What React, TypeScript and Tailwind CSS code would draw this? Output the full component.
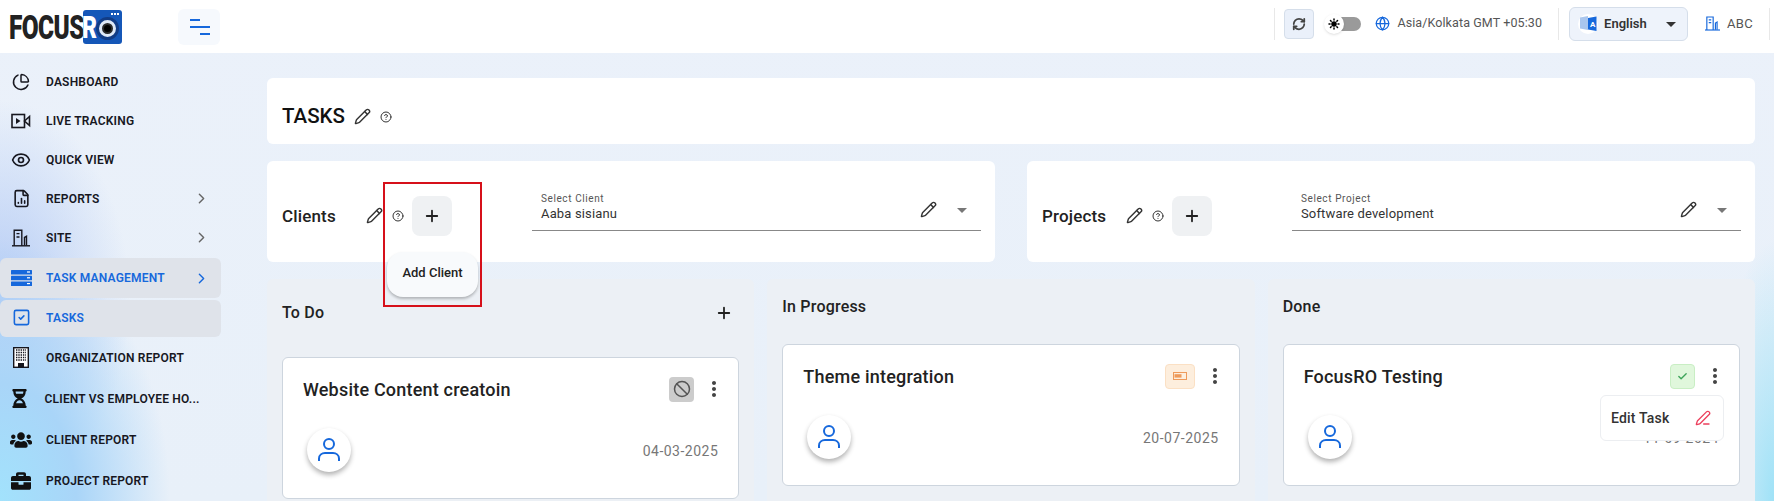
import { Ban, Check, ChevronRight, CircleHelp, ChartPie, Eye, FileChartColumn, Globe, PenLine, Pencil, Plus, RefreshCw, SquareCheck, Sun } from "lucide-react";
import { FaBriefcase, FaHourglassHalf, FaUsers } from "react-icons/fa";
import { MdArrowDropDown, MdMoreVert } from "react-icons/md";
import type { ReactNode } from "react";

const LiveIcon = () => (
  <svg width="20" height="16" viewBox="0 0 20 16" fill="none" stroke="#17171f" strokeWidth="1.6">
    <rect x="1" y="1.5" width="12.5" height="13" />
    <path d="M5 5v6l4.5-3z" fill="#17171f" stroke="none" />
    <path d="M13.5 8 18.5 3.5v9z" />
  </svg>
);

const StackIcon = () => (
  <svg width="21" height="16" viewBox="0 0 21 16" fill="#1668dc">
    <rect x="0" y="0" width="21" height="4.4" rx="0.5" />
    <rect x="0" y="5.8" width="21" height="4.4" rx="0.5" />
    <rect x="0" y="11.6" width="21" height="4.4" rx="0.5" />
    <rect x="16" y="1.4" width="3" height="1.2" fill="#fff" />
    <rect x="16" y="7.2" width="3" height="1.2" fill="#fff" />
    <rect x="16" y="13" width="3" height="1.2" fill="#fff" />
  </svg>
);

const OfficeIcon = () => (
  <svg width="16" height="21" viewBox="0 0 16 21">
    <rect x="0.7" y="0.7" width="14.6" height="19.6" fill="#fff" stroke="#15151c" strokeWidth="1.4" />
    <path d="M3 3h10M3 5.5h10M3 8h10M3 10.5h10M3 13h10" stroke="#15151c" strokeWidth="1.3" strokeDasharray="1.4 0.9" />
    <rect x="5" y="16" width="6" height="4.5" fill="#15151c" />
  </svg>
);

const SiteIcon = ({ color = "#17171f", size = 18 }: { color?: string; size?: number }) => (
  <svg width={size} height={size} viewBox="0 0 18 18" fill="none" stroke={color} strokeWidth="1.4">
    <path d="M0 16.8h18" />
    <path d="M2.2 16.8V1.2h7.6v15.6" />
    <path d="M4.5 4.6h3M4.5 8h3" />
    <path d="M12.5 16.5V8.5l2-1.2v9.2" />
  </svg>
);

const UserIcon = () => (
  <svg width="24" height="26" viewBox="0 0 24 26" fill="none" stroke="#1668dc" strokeWidth="2">
    <circle cx="12" cy="7" r="5" />
    <path d="M2 24v-2.5C2 18 5 16 8 16h8c3 0 6 2 6 5.5V24" />
  </svg>
);

const TranslateIcon = () => (
  <svg width="17" height="17" viewBox="0 0 17 17">
    <path d="M0 2.5 8 1v14l-8-1.5z" fill="#a9c6ee" />
    <path d="M8 3 16.5 1.5V16L8 14.5z" fill="#1668dc" />
    <text x="10" y="11.5" fontSize="8" fontWeight="700" fill="#fff" fontFamily="Roboto, sans-serif">A</text>
  </svg>
);

const BatteryIcon = () => (
  <svg width="14" height="8" viewBox="0 0 14 8">
    <rect x="0.5" y="0.5" width="13" height="7" fill="none" stroke="#ee9a5a" />
    <rect x="1.5" y="2.2" width="7" height="3.4" fill="#ee9a5a" />
  </svg>
);

const Logo = () => (
  <div className="flex items-center pl-[9px] w-[178px]">
    <span className="w-[74px] font-black text-[34px] leading-none text-[#222] origin-left scale-x-[0.72] tracking-tight whitespace-nowrap">FOCUS</span>
    <div className="relative w-[39px] h-[34px] bg-[#1557b8] rounded-[3px] flex items-center">
      <span className="font-black text-[32px] leading-none text-white origin-left scale-x-[0.72] -ml-px">R</span>
      <div className="absolute left-[13px] top-[7px] size-[23px] rounded-full bg-[#dfe9f7] border-[3px] border-[#123c85] flex items-center justify-center">
        <div className="size-[11px] rounded-full bg-black border-2 border-[#2a2a2a]" />
      </div>
      <div className="absolute right-[3px] top-[3px] flex gap-px">
        <div className="size-[2px] bg-white" />
        <div className="size-[2px] bg-white" />
        <div className="size-[2px] bg-white" />
      </div>
    </div>
  </div>
);

const Header = () => (
  <header className="h-[53px] bg-white flex items-center shrink-0 overflow-hidden">
    <Logo />
    <button className="w-[42px] h-[36px] rounded-md bg-[#f6f9fd] flex flex-col justify-center px-3 gap-[5px]">
      <span className="block h-[2px] w-[10px] bg-[#1668dc]" />
      <span className="block h-[2px] w-[20px] bg-[#1668dc]" />
      <span className="block h-[2px] w-[10px] ml-[10px] bg-[#1668dc]" />
    </button>
    <div className="ml-auto mr-[-48px] mb-[6px] flex items-center h-[32px] shrink-0">
      <div className="h-full w-px bg-[#e8e8e8] mr-[9px]" />
      <button className="size-[30px] rounded-[4px] bg-[#eaf0fa] border border-[#d5deea] flex items-center justify-center">
        <RefreshCw size={14} strokeWidth={3} className="text-[#444]" />
      </button>
      <div className="relative w-[38px] h-[14px] ml-[9px] flex justify-end">
        <div className="w-[28px] h-[14px] rounded-full bg-[#9a9a9a]" />
        <div className="absolute left-[1px] -top-[3px] size-[20px] rounded-full bg-white shadow flex items-center justify-center">
          <Sun size={12} strokeWidth={3} className="text-black fill-black" />
        </div>
      </div>
      <Globe size={15} className="ml-[14px] text-[#1668dc]" />
      <span className="ml-[7px] text-[12.5px] tracking-[0.1px] text-[#555]">Asia/Kolkata GMT +05:30</span>
      <div className="h-full w-px bg-[#e8e8e8] ml-4 mr-[10px]" />
      <button className="w-[119px] h-[34px] rounded-md bg-[#eef3fb] border border-[#d5deea] flex items-center pl-[8px]">
        <span className="size-[20px] rounded-full bg-white flex items-center justify-center">
          <TranslateIcon />
        </span>
        <span className="ml-[6px] text-[13px] font-semibold text-[#333]">English</span>
        <MdArrowDropDown size={24} className="ml-[12px] text-[#333]" />
      </button>
      <div className="ml-[17px]">
        <SiteIcon color="#1668dc" size={15} />
      </div>
      <span className="ml-[7px] text-[13px] tracking-[0.3px] text-[#555]">ABC</span>
      <div className="h-full w-px bg-[#e8e8e8] ml-4" />
      <div className="size-[36px] ml-4 rounded-full bg-white border border-[#e8e8e8] shrink-0" />
    </div>
  </header>
);

type NavItem = { label: string; icon: ReactNode; chevron?: boolean; active?: boolean; h: string; extra?: string };

const navItems: NavItem[] = [
  { label: "DASHBOARD", icon: <ChartPie size={18} className="text-[#17171f]" />, h: "h-[39px]" },
  { label: "LIVE TRACKING", icon: <LiveIcon />, h: "h-[39px]" },
  { label: "QUICK VIEW", icon: <Eye size={20} className="text-[#17171f]" />, h: "h-[39px]" },
  { label: "REPORTS", icon: <FileChartColumn size={19} className="text-[#17171f]" />, chevron: true, h: "h-[39px]" },
  { label: "SITE", icon: <SiteIcon />, chevron: true, h: "h-[39px]" },
  { label: "TASK MANAGEMENT", icon: <StackIcon />, chevron: true, active: true, h: "h-[40px]", extra: "mt-px mb-[2px]" },
  { label: "TASKS", icon: <SquareCheck size={19} className="text-[#1668dc]" />, active: true, h: "h-[37px]", extra: "pb-[2px]" },
  { label: "ORGANIZATION REPORT", icon: <OfficeIcon />, h: "h-[41px]" },
  { label: "CLIENT VS EMPLOYEE HO...", icon: <FaHourglassHalf size={19} className="text-[#111]" />, h: "h-[41px]", extra: "-ml-[1.5px]" },
  { label: "CLIENT REPORT", icon: <FaUsers size={22} className="text-[#111]" />, h: "h-[41px]" },
  { label: "PROJECT REPORT", icon: <FaBriefcase size={20} className="text-[#111]" />, h: "h-[41px]" },
];

const Sidebar = () => (
  <aside className="w-[267px] shrink-0 pt-[9px]">
    <nav className="flex flex-col">
      {navItems.map((item) => (
        <div
          key={item.label}
          className={`${item.h} ${item.extra ?? ""} w-[221px] flex items-center rounded-md ${item.active ? "bg-[#dfe3ea] text-[#1668dc]" : "text-[#17171f]"}`}
        >
          <div className="w-[42px] flex justify-center shrink-0">{item.icon}</div>
          <span className="ml-[4px] text-[12px] font-semibold tracking-[0.2px] whitespace-nowrap">{item.label}</span>
          {item.chevron && <ChevronRight size={17} className={`ml-auto mr-[11px] ${item.active ? "text-[#1668dc]" : "text-[#666]"}`} />}
        </div>
      ))}
    </nav>
  </aside>
);

const Edit = ({ size = 17 }: { size?: number }) => <Pencil size={size} className="text-[#333]" />;
const Help = () => <CircleHelp size={12} className="text-[#333] ml-[9px] mr-[8px]" />;

const SelectBox = ({ label, value }: { label: string; value: string }) => (
  <div className="flex-1 h-[46px] border-b border-[#888] flex items-end pl-[9px] pb-[8px]">
    <div className="flex flex-col">
      <span className="text-[10px] leading-[12px] tracking-[0.6px] text-[#555]">{label}</span>
      <span className="text-[13px] leading-[17px] tracking-[0.15px] text-[#333]">{value}</span>
    </div>
    <div className="ml-auto flex items-center gap-[13px] pr-[7px]">
      <Edit />
      <MdArrowDropDown size={24} className="text-[#777]" />
    </div>
  </div>
);

const PickerCard = ({ title, titleW, selW, label, value, popup }: { title: string; titleW: string; selW: string; label: string; value: string; popup?: boolean }) => (
  <div className="relative flex-1 h-[101px] bg-white rounded-md flex items-center pl-[15px] pr-[14px] pt-[8px]">
    <span className={`${titleW} mt-[2px] text-[17px] font-medium tracking-[0.15px] text-[#222]`}>{title}</span>
    <Edit />
    <Help />
    <button className="size-[40px] rounded-lg bg-[#eff1f3] flex items-center justify-center">
      <Plus size={18} strokeWidth={2.4} className="text-[#222]" />
    </button>
    <div className={`${selW} flex-none ml-auto flex mb-[16px]`}>
      <SelectBox label={label} value={value} />
    </div>
    {popup && (
      <>
        <div className="absolute left-[120px] top-[91px] w-[91px] h-[45px] rounded-2xl bg-[#f8fafc] shadow-[0_2px_3px_rgba(0,0,0,0.25)] flex items-center justify-center pb-[4px] z-10 text-[13px] font-medium text-[#222]">
          Add Client
        </div>
        <div className="absolute left-[116px] top-[21px] w-[99px] h-[125px] border-2 border-[#d6101a] z-20" />
      </>
    )}
  </div>
);

const Avatar = () => (
  <div className="size-[44px] rounded-full bg-white shadow-[0_3px_5px_rgba(0,0,0,0.3)] flex items-center justify-center">
    <UserIcon />
  </div>
);

const TaskCard = ({ title, date, badge, badgeClass, menu }: { title: string; date: string; badge: ReactNode; badgeClass: string; menu?: boolean }) => (
  <div className="relative h-[142px] bg-white rounded-md border border-[#cdd5de] px-[20px] pt-[18px]">
    <div className="flex items-center h-[26px]">
      <span className="text-[18px] font-medium tracking-[0.2px] text-[#222]">{title}</span>
      <div className={`ml-auto h-[25px] rounded-[4px] flex items-center justify-center ${badgeClass}`}>{badge}</div>
      <MdMoreVert size={24} className="ml-[8px] -mr-[8px] text-[#444]" />
    </div>
    <div className="flex items-center justify-between mt-[26px] pl-[4px]">
      <Avatar />
      <span className="text-[14px] tracking-[0.5px] text-[#777] pt-[3px]">{date}</span>
    </div>
    {menu && (
      <div className="absolute right-[15px] top-[50px] w-[124px] h-[46px] rounded-md bg-white border border-[#eceef1] flex items-center pl-[10px] pr-[12px] justify-between">
        <span className="text-[14px] font-medium tracking-[0.2px] text-[#333]">Edit Task</span>
        <PenLine size={16} className="text-[#ec3f5c]" />
      </div>
    )}
  </div>
);

const Column = ({ title, tall, action, children }: { title: string; tall?: boolean; action?: boolean; children: ReactNode }) => (
  <div className="flex-1 h-[300px] rounded-md bg-[#ecf0f5] px-[15px]">
    <div className={`flex items-center ${tall ? "h-[78px] pb-[10px]" : "h-[65px] pb-[10px]"} text-[16px] font-medium tracking-[0.2px] text-[#222]`}>
      {title}
      {action && <Plus size={18} strokeWidth={2.4} className="ml-auto mr-[6px] text-[#222]" />}
    </div>
    {children}
  </div>
);

export default function App() {
  return (
    <div className="relative w-full h-screen overflow-hidden flex flex-col font-['Roboto',sans-serif] bg-[radial-gradient(ellipse_170px_260px_at_0px_500px,#a2e2fc_0%,#a9d5f8_45%,rgba(169,213,248,0)_100%),radial-gradient(ellipse_130px_200px_at_0px_300px,#b4cbf5_0%,rgba(180,203,245,0)_100%),radial-gradient(ellipse_60px_260px_at_1774px_501px,#9fe2f7_0%,rgba(159,226,247,0)_100%),linear-gradient(#ebf1fa,#e8f0f9)]">
      <Header />
      <div className="flex flex-1 min-h-0">
        <Sidebar />
        <main className="flex-1 min-w-0 pr-[19px] pt-[25px] flex flex-col gap-[17px]">
          <div className="h-[66px] bg-white rounded-md flex items-center pl-[15px] pt-[11px] shrink-0">
            <h1 className="text-[20.5px] font-medium text-[#111] mr-[9px]">TASKS</h1>
            <Edit />
            <Help />
          </div>
          <div className="flex gap-[32px] shrink-0">
            <PickerCard title="Clients" titleW="w-[84px]" selW="w-[449px]" label="Select Client" value="Aaba sisianu" popup />
            <PickerCard title="Projects" titleW="w-[84px]" selW="w-[449px]" label="Select Project" value="Software development" />
          </div>
          <div className="flex gap-[13px]">
            <Column title="To Do" tall action>
              <TaskCard title="Website Content creatoin" date="04-03-2025" badgeClass="w-[25px] bg-[#cccccc]" badge={<Ban size={18} className="text-[#555]" />} />
            </Column>
            <Column title="In Progress">
              <TaskCard title="Theme integration" date="20-07-2025" badgeClass="w-[30px] bg-[#fdeedd] border border-[#fbe0c4]" badge={<BatteryIcon />} />
            </Column>
            <Column title="Done">
              <TaskCard title="FocusRO Testing" date="11-09-2024" badgeClass="w-[25px] bg-[#e0f7dc] border border-[#c9eec4]" badge={<Check size={11} strokeWidth={3} className="text-[#3fa55b]" />} menu />
            </Column>
          </div>
        </main>
      </div>
    </div>
  );
}
